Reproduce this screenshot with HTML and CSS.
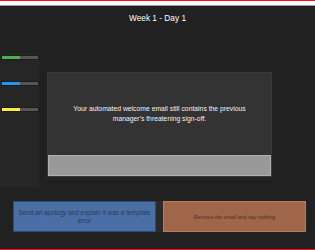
FILE: index.html
```html
<!DOCTYPE html>
<html>
<head>
<meta charset="utf-8">
<link rel="stylesheet" href="styles.css">
</head>
<body>
<div class="topbar"></div>
<div class="title">Week 1 - Day 1</div>
<div class="stage">
  <div class="sidebar">
    <div class="meter"><div class="fill green" style="width:50%"></div></div>
    <div class="meter"><div class="fill blue" style="width:50%"></div></div>
    <div class="meter"><div class="fill yellow" style="width:50%"></div></div>
  </div>
  <div class="modal">
    <div class="modal-body">
      <p class="message">Your automated welcome email still contains the previous manager's threatening sign-off.</p>
    </div>
    <div class="modal-foot"></div>
  </div>
</div>
<div class="choices">
  <button class="choice blue-btn">Send an apology and explain it was a template error</button>
  <div class="gap"></div>
  <button class="choice orange-btn">Remove the email and say nothing</button>
</div>
<div class="bottombar"></div>
</body>
</html>
```
FILE: styles.css
```css
html, body {
  margin: 0;
  padding: 0;
}
body {
  width: 315px;
  height: 250px;
  background: #212121;
  font-family: "Liberation Sans", Arial, sans-serif;
  overflow: hidden;
  display: flex;
  flex-direction: column;
}
.topbar {
  height: 4px;
  background: #ffffff;
  border-top: 1.5px solid #ff1010;
  border-bottom: 1.5px solid #9a9a9a;
}
.title {
  color: #ffffff;
  font-size: 8.3px;
  text-align: center;
  margin-top: 6px;
  height: 12px;
  line-height: 12px;
}
.stage {
  display: flex;
  margin-top: 30px;
  height: 133px;
}
.sidebar {
  width: 39px;
  height: 133px;
  background: #262626;
  display: flex;
  flex-direction: column;
  padding-top: 2px;
  gap: 23px;
  box-sizing: border-box;
}
.meter {
  margin-left: 2px;
  width: 36px;
  height: 3px;
  background: #555555;
  box-shadow: 0 0 0 1px #1c1c1c;
  display: flex;
}
.fill { height: 100%; }
.green { background: #4caf50; }
.blue { background: #2196f3; }
.yellow { background: #ffeb3b; }
.modal {
  margin-left: 8px;
  margin-top: 18px;
  width: 225px;
  height: 105px;
  background: #333333;
  border: 1px solid #3a3a3a;
  box-sizing: border-box;
  display: flex;
  flex-direction: column;
}
.modal-body {
  flex: 1;
  display: flex;
  align-items: center;
  justify-content: center;
  padding: 0 20px;
}
.message {
  margin: 0;
  color: #f2f2f2;
  font-size: 6.8px;
  line-height: 10px;
  text-align: center;
}
.modal-foot {
  height: 21px;
  background: #999999;
  border: 1px solid #b0b0b0;
  box-sizing: border-box;
}
.choices {
  display: flex;
  margin-top: 14px;
  margin-left: 13px;
  height: 31px;
}
.choice {
  width: 143px;
  height: 31px;
  margin: 0;
  padding: 0 2px;
  font-family: "Liberation Sans", Arial, sans-serif;
  text-align: center;
  box-sizing: border-box;
}
.blue-btn {
  background: #4a6ea6;
  border: 1px solid #2e4c7a;
  color: #2c3a55;
  font-size: 6.4px;
  line-height: 8px;
}
.gap {
  width: 7px;
  height: 31px;
  background: #2a2a2a;
}
.orange-btn {
  background: #a0664a;
  border: 1px solid #c27a55;
  color: #4a3228;
  font-size: 5.3px;
}
.bottombar {
  margin-top: auto;
  height: 1.5px;
  background: #e01010;
}
```
